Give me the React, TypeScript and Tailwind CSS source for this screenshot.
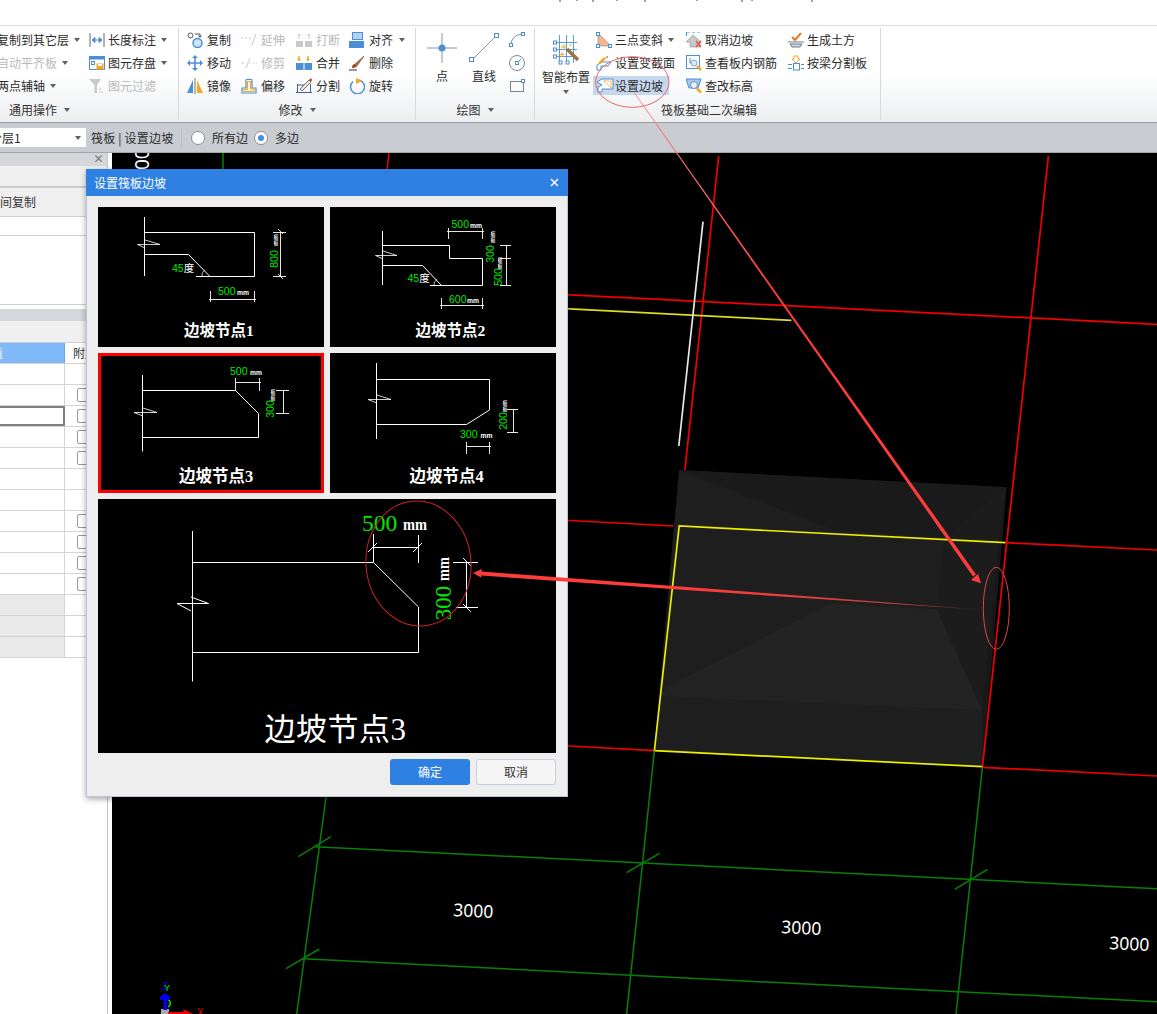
import React from "react";

const F = "font-['Noto_Sans_CJK_SC','Noto_Sans',sans-serif]";
const B = "#4a8fd8";
const O = "#f5a623";
const G = "#c9c9c9";

function S({ children, w = 16, h = 16 }: { children: React.ReactNode; w?: number; h?: number }) {
  return (
    <svg width={w} height={h} viewBox={`0 0 ${w} ${h}`} className="shrink-0" fill="none">
      {children}
    </svg>
  );
}

const Icons: Record<string, React.ReactNode> = {
  len: (
    <S>
      <path d="M1 1v14M15 1v14" stroke="#5b6b80" />
      <path d="M3 8h10M3 8l3-2.5v5zM13 8l-3-2.5v5z" stroke={B} fill={B} />
    </S>
  ),
  save: (
    <S>
      <rect x="0.5" y="1.5" width="15" height="13" stroke={B} fill="#fff" />
      <rect x="0.5" y="1.5" width="15" height="3" fill={B} />
      <rect x="2.5" y="6.5" width="3" height="3" stroke={B} />
      <rect x="7.5" y="8.5" width="7" height="6" fill={O} />
      <rect x="9" y="9" width="4" height="2" fill="#fff" />
    </S>
  ),
  filter: (
    <S>
      <path d="M0 1h12L8 7v8H5.5V7z" fill={G} />
      <path d="M10 11h2M10 14h4" stroke={G} />
    </S>
  ),
  copy: (
    <S>
      <circle cx="3.5" cy="3.5" r="2.5" stroke="#555" />
      <path d="M8 2h5v3M11.5 3.5l1.5 2 1.5-2" stroke="#555" />
      <circle cx="10.5" cy="11" r="4.5" stroke={B} strokeWidth="1.5" fill="#cfe2f6" />
    </S>
  ),
  extend: (
    <S>
      <path d="M0 6h2M4 6h2M8 6h2" stroke={G} />
      <path d="M11 13l4-11" stroke={G} />
    </S>
  ),
  brk: (
    <S>
      <rect x="0" y="9" width="7" height="6" fill={G} />
      <rect x="9" y="9" width="7" height="6" fill={G} />
      <path d="M3 7V2M1.5 3.5L3 2l1.5 1.5M13 7V2M11.5 3.5L13 2l1.5 1.5" stroke={G} />
    </S>
  ),
  align: (
    <S>
      <rect x="3.5" y="0.5" width="10" height="7" fill="#b5d0f0" stroke={B} />
      <rect x="0" y="9" width="15" height="7" fill={B} />
    </S>
  ),
  move: (
    <S>
      <path d="M8 1v14M1 8h14" stroke={B} strokeWidth="1.6" />
      <path d="M8 0l3 3H5zM8 16l3-3H5zM0 8l3-3v6zM16 8l-3-3v6z" fill={B} />
    </S>
  ),
  trim: (
    <S>
      <path d="M0 8h3M12 8h1.5M15 8h1" stroke={G} />
      <path d="M5 13l4-10" stroke={G} />
      <path d="M9 8h1" stroke={G} />
    </S>
  ),
  merge: (
    <S>
      <rect x="0" y="8" width="7.5" height="7" fill={B} />
      <rect x="8.5" y="8" width="7.5" height="7" fill={B} />
      <path d="M3 6V1M1.5 4.5h3M12 6V1M10.5 4.5h3" stroke={O} strokeWidth="1.4" />
    </S>
  ),
  del: (
    <S>
      <path d="M15 1L6 9l2 2z" fill="#a8794f" stroke="#6e4a2a" strokeWidth="0.6" />
      <path d="M6 9c-2 0-3 1.500-3 4 2 0 5-1 5-2z" fill="#9c4a1a" />
      <path d="M0 15h8" stroke="#333" />
    </S>
  ),
  mirror: (
    <S>
      <path d="M0 15L6 2v13z" fill={B} />
      <path d="M8 0v16" stroke="#777" />
      <path d="M10 2l6 13h-6z" fill={O} />
    </S>
  ),
  offset: (
    <S>
      <path d="M1 15V10h4V2c0-1 6-1 6 0v8h4v5z" stroke={B} strokeWidth="1.2" fill="#fff" />
      <path d="M3 13.500v-2h3.500V3.500h3V11h3.500v2.500z" stroke={O} strokeWidth="1.2" />
    </S>
  ),
  split: (
    <S>
      <path d="M1.500 6v9M14.500 6v9M0 14.500h16M1 7h7" stroke="#3f5f96" />
      <path d="M4 11L13 2l2 2-9 9z" fill="#e5e5e5" stroke="#555" strokeWidth="0.8" />
      <path d="M13 2l2-2 1 2-1 2z" fill="#c0392b" />
    </S>
  ),
  rotate: (
    <S>
      <path d="M4 3.500a7 7 0 1 0 6-1.500" stroke={B} strokeWidth="1.5" fill="none" />
      <path d="M7 0l6 3-6 3z" fill={O} />
    </S>
  ),
  point: (
    <S w={30} h={30}>
      <path d="M15 0v30M0 15h30" stroke="#8a96a6" />
      <circle cx="15" cy="15" r="3.500" fill={B} />
    </S>
  ),
  line: (
    <S w={30} h={30}>
      <path d="M3 27L27 3" stroke="#8a96a6" />
      <rect x="0.500" y="24.500" width="4" height="4" fill="#fff" stroke={B} />
      <rect x="25.500" y="0.500" width="4" height="4" fill="#fff" stroke={B} />
    </S>
  ),
  arc: (
    <S>
      <path d="M2 13C2 7 6 3 13 2" stroke="#7a8696" />
      <rect x="0.500" y="11.500" width="3" height="3" fill="#fff" stroke={B} />
      <rect x="12.500" y="0.500" width="3" height="3" fill="#fff" stroke={B} />
    </S>
  ),
  circle: (
    <S>
      <circle cx="8" cy="8" r="7.500" stroke="#7a8696" fill="#fff" />
      <path d="M8 8l4-4" stroke="#7a8696" />
      <rect x="6.500" y="6.500" width="3" height="3" fill="#fff" stroke={B} />
    </S>
  ),
  rect: (
    <S>
      <rect x="1.500" y="3.500" width="13" height="10" stroke="#7a8696" />
      <rect x="12.500" y="1.500" width="3" height="3" fill="#fff" stroke={B} />
    </S>
  ),
  tri: (
    <S>
      <path d="M2 1v13h13z" fill="#f6b48a" stroke="#7a8696" strokeWidth="0.6" />
      <rect x="0.500" y="0.500" width="3" height="3" fill="#fff" stroke={B} />
      <rect x="0.500" y="12.500" width="3" height="3" fill="#fff" stroke={B} />
      <rect x="12.500" y="12.500" width="3" height="3" fill="#fff" stroke={B} />
    </S>
  ),
  section: (
    <S>
      <path d="M1 15V10l5-3h9l-3 4H5v4z" stroke={B} fill="#fff" />
      <path d="M2 8l6-6 2 1.500-6 6z" fill={O} />
      <path d="M10 2l1-1 1 1-1 1.500z" fill="#c0562b" />
    </S>
  ),
  slope: (
    <S w={18} h={16}>
      <path d="M6 1h11v10H6v3H2V9l4-2-5-3z" stroke={B} fill="#fff" />
      <path d="M8 3h7v7" stroke={O} strokeDasharray="2 1" />
      <path d="M8 3l7 7" stroke={O} strokeDasharray="2 1" />
    </S>
  ),
  cancel: (
    <S>
      <path d="M0 10L7 3l7 6v6H4v-5z" fill="#c8c8c8" stroke="#8f8f8f" strokeWidth="0.6" />
      <path d="M1 0h3M6 0h3M11 0h3" stroke={B} />
      <path d="M0.500 0v4" stroke={B} />
      <path d="M10 9l5 6M15 9l-5 6" stroke="#e2574c" strokeWidth="1.6" />
    </S>
  ),
  view: (
    <S>
      <rect x="0.500" y="0.500" width="13" height="13" stroke={B} fill="#fff" />
      <path d="M4 3v5h3" stroke={B} />
      <circle cx="8" cy="8" r="3" stroke="#7ba6d8" fill="#dfe9f6" />
      <path d="M11 11l4 4" stroke={O} strokeWidth="2.500" />
    </S>
  ),
  elev: (
    <S>
      <path d="M0 1h15l-3 9H3z" fill="#a9c6ea" stroke={B} />
      <circle cx="8" cy="7" r="3.500" stroke="#6f8fb5" fill="#eaf1fa" />
      <path d="M11 10.500l4 4" stroke={O} strokeWidth="2.500" />
    </S>
  ),
  earth: (
    <S>
      <path d="M4 5l3 3 6-7" stroke="#e8792b" strokeWidth="2" />
      <path d="M0 10h16M2 12h12l-2 3H4z" stroke="#6b7a8c" fill="#cfd6de" />
    </S>
  ),
  beam: (
    <S>
      <path d="M6 1h4v3h2L8 8 4 4h2z" stroke={O} fill="#fff" />
      <rect x="5.500" y="8.500" width="6" height="6.500" stroke={B} fill="#fff" />
      <path d="M0 9.500h4M0 13.500h4M13 9.500h3M13 13.500h3" stroke={B} />
    </S>
  ),
  smart: (
    <S w={26} h={30}>
      <path d="M0 7.500h24M0 14.500h24M0 21.500h24M6.500 0v28M13.500 0v28M20.500 0v28" stroke={B} strokeWidth="0.9" />
      <rect x="0.500" y="6" width="3" height="3" fill="#fff" stroke={B} />
      <rect x="0.500" y="13" width="3" height="3" fill="#fff" stroke={B} />
      <rect x="0.500" y="20" width="3" height="3" fill="#fff" stroke={B} />
      <rect x="6" y="26" width="3" height="3" fill="#fff" stroke={B} />
      <rect x="13" y="26" width="3" height="3" fill="#fff" stroke={B} />
      <path d="M14 14l11 11" stroke="#9a7348" strokeWidth="3.500" />
      <path d="M8 12h6M11 9v6M17 9l1 2M9 17v5M6.500 19.500h5" stroke={O} />
    </S>
  ),
};

function Arrow() {
  return <span className="w-0 h-0 shrink-0 border-x-[3.5px] border-t-[4px] border-x-transparent border-t-[#606060]" />;
}

function Item({
  icon,
  t,
  arrow,
  off,
  wide,
  hi,
}: {
  icon?: string;
  t: string;
  arrow?: boolean;
  off?: boolean;
  wide?: boolean;
  hi?: boolean;
}) {
  return (
    <div className="h-[23px] flex items-center">
      <div
        className={`flex items-center whitespace-nowrap ${wide ? "gap-[4px]" : "gap-[3px]"} ${
          hi ? "bg-[#c6d7ee] -ml-[3px] pl-[3px] w-[76px] h-[19px]" : ""
        } ${off ? "text-[#b9b9b9]" : "text-[#2a2a2a]"}`}
      >
        {icon ? <span className="w-[16px] h-[16px] flex items-center">{Icons[icon]}</span> : null}
        <span>{t}</span>
        {arrow ? (
          <span className="ml-[2px] flex">
            <Arrow />
          </span>
        ) : null}
      </div>
    </div>
  );
}

function Col({ cls, children }: { cls: string; children: React.ReactNode }) {
  return <div className={`flex flex-col shrink-0 ${cls}`}>{children}</div>;
}

function GroupLabel({ t, arrow, cls }: { t: string; arrow?: boolean; cls?: string }) {
  return (
    <div className={`h-[23px] pt-[3px] flex items-center gap-[7px] text-[#333] ${cls ?? "justify-center"}`}>
      <span>{t}</span>
      {arrow ? <Arrow /> : null}
    </div>
  );
}

function Ribbon() {
  return (
    <div className="h-[98px] shrink-0 border-t border-b border-t-[#dcdcdc] border-b-[#9b9ea3] bg-linear-to-b from-white from-50% to-[#eceef0] pt-[2px] flex text-[12px] overflow-hidden">
      <div className="w-[179px] h-[92px] shrink-0 border-r border-[#d7d9dc] flex flex-col">
        <div className="h-[69px] flex">
          <Col cls="w-[92px] -ml-[3px]">
            <div className="h-[23px] flex items-center whitespace-nowrap text-[#2a2a2a]">
              复制到其它层
              <span className="ml-[5px] flex">
                <Arrow />
              </span>
            </div>
            <div className="h-[23px] flex items-center whitespace-nowrap text-[#b9b9b9]">
              自动平齐板
              <span className="ml-[5px] flex">
                <Arrow />
              </span>
            </div>
            <div className="h-[23px] flex items-center whitespace-nowrap text-[#2a2a2a]">
              两点辅轴
              <span className="ml-[5px] flex">
                <Arrow />
              </span>
            </div>
          </Col>
          <Col cls="">
            <Item icon="len" t="长度标注" arrow />
            <Item icon="save" t="图元存盘" arrow />
            <Item icon="filter" t="图元过滤" off />
          </Col>
        </div>
        <GroupLabel t="通用操作" arrow cls="pl-[9px]" />
      </div>

      <div className="w-[237px] h-[92px] shrink-0 border-r border-[#d7d9dc] flex flex-col">
        <div className="h-[69px] flex pl-[8px]">
          <Col cls="w-[54px]">
            <Item wide icon="copy" t="复制" />
            <Item wide icon="move" t="移动" />
            <Item wide icon="mirror" t="镜像" />
          </Col>
          <Col cls="w-[55px]">
            <Item wide icon="extend" t="延伸" off />
            <Item wide icon="trim" t="修剪" off />
            <Item wide icon="offset" t="偏移" />
          </Col>
          <Col cls="w-[53px]">
            <Item wide icon="brk" t="打断" off />
            <Item wide icon="merge" t="合并" />
            <Item wide icon="split" t="分割" />
          </Col>
          <Col cls="">
            <Item wide icon="align" t="对齐" arrow />
            <Item wide icon="del" t="删除" />
            <Item wide icon="rotate" t="旋转" />
          </Col>
        </div>
        <GroupLabel t="修改" arrow />
      </div>

      <div className="w-[119px] h-[92px] shrink-0 border-r border-[#d7d9dc] flex flex-col">
        <div className="h-[69px] flex pl-[11px]">
          <div className="w-[30px] pt-[5px] flex flex-col items-center shrink-0">
            {Icons.point}
            <div className="h-[26px] flex items-center whitespace-nowrap text-[#2a2a2a]">点</div>
          </div>
          <div className="w-[30px] ml-[12px] pt-[5px] flex flex-col items-center shrink-0">
            {Icons.line}
            <div className="h-[26px] flex items-center whitespace-nowrap text-[#2a2a2a]">直线</div>
          </div>
          <div className="ml-[10px] flex flex-col">
            <div className="h-[23px] flex items-center">{Icons.arc}</div>
            <div className="h-[23px] flex items-center">{Icons.circle}</div>
            <div className="h-[23px] flex items-center">{Icons.rect}</div>
          </div>
        </div>
        <GroupLabel t="绘图" arrow />
      </div>

      <div className="w-[346px] h-[92px] shrink-0 border-r border-[#d7d9dc] flex flex-col">
        <div className="h-[69px] flex pl-[7px]">
          <div className="w-[48px] pt-[7px] flex flex-col items-center shrink-0">
            {Icons.smart}
            <div className="h-[24px] flex items-center whitespace-nowrap text-[#2a2a2a]">智能布置</div>
            <div className="mt-[1px] flex">
              <Arrow />
            </div>
          </div>
          <Col cls="w-[90px] ml-[6px]">
            <Item icon="tri" t="三点变斜" arrow />
            <Item icon="section" t="设置变截面" />
            <Item hi icon="slope" t="设置边坡" />
          </Col>
          <Col cls="w-[102px]">
            <Item icon="cancel" t="取消边坡" />
            <Item icon="view" t="查看板内钢筋" />
            <Item icon="elev" t="查改标高" />
          </Col>
          <Col cls="">
            <Item icon="earth" t="生成土方" />
            <Item icon="beam" t="按梁分割板" />
          </Col>
        </div>
        <GroupLabel t="筏板基础二次编辑" cls="justify-center pl-[3px]" />
      </div>
    </div>
  );
}

function Radio({ on, t }: { on?: boolean; t: string }) {
  return (
    <div className="flex items-center gap-[7px]">
      <span className="w-[14px] h-[14px] rounded-full bg-white border border-[#8e8e8e] flex items-center justify-center">
        {on ? <span className="w-[6px] h-[6px] rounded-full bg-[#3d8fe8]" /> : null}
      </span>
      <span>{t}</span>
    </div>
  );
}

function OptionBar() {
  return (
    <div className="h-[30px] shrink-0 bg-[#c9ccd1] border-b border-[#a4a6ab] flex items-center text-[12px] text-[#2a2a2a] whitespace-nowrap">
      <div className="w-[86px] h-[19px] bg-white flex items-center overflow-hidden relative shrink-0">
        <span className="-ml-[10px]">分层1</span>
        <span className="absolute left-[75px] top-[8px] flex">
          <Arrow />
        </span>
      </div>
      <span className="ml-[5px] w-[90px] shrink-0 tracking-[0.2px]">筏板 | 设置边坡</span>
      <span className="w-px h-[19px] bg-[#bdc0c5] shrink-0" />
      <div className="ml-[9px] w-[63px] shrink-0">
        <Radio t="所有边" />
      </div>
      <Radio on t="多边" />
    </div>
  );
}

type Cell = "plain" | "check" | "sel" | "gray";
const rows: Cell[] = ["plain", "check", "sel", "check", "check", "plain", "plain", "check", "check", "check", "check", "gray", "gray", "gray"];

function LeftPanel() {
  return (
    <div className="w-[112px] shrink-0 bg-white text-[12px] text-[#333] whitespace-nowrap">
      <div className="w-[108px] h-full border-r border-[#c6c6c6] flex flex-col">
        <div className="h-[13px] bg-[#d5d7db] relative">
          <span className="absolute left-[93px] -top-[1px] text-[11px] font-bold leading-[13px] text-[#777]">×</span>
        </div>
        <div className="h-[22px] bg-[#f0f0f0] border-b-2 border-[#c9cbd0]" />
        <div className="h-[29px] bg-[#f0f0f0] border-b border-[#cfd0d3] flex items-center -ml-[12px]">
          <span>空间复制</span>
        </div>
        <div className="h-[19px] border-b border-[#cfd0d3]" />
        <div className="h-[69px] border-b border-[#cfd0d3]" />
        <div className="h-[4px]" />
        <div className="h-[12px] bg-[#d5d7db]" />
        <div className="h-[22px] bg-[#f0f0f0] border-b border-[#cfd0d3]" />
        <div className="h-[21px] flex border-b border-[#d4d4d4]">
          <div className="w-[65px] bg-[#7fb9f8] border-r border-[#6aa8ea] overflow-hidden flex items-center">
            <span className="-ml-[9px] text-[#eee]">值</span>
          </div>
          <div className="pl-[8px] flex items-center">附加</div>
        </div>
        {rows.map((r, i) => (
          <div key={i} className="h-[21px] flex border-b border-[#d4d4d4]">
            <div
              className={`w-[65px] ${r === "gray" ? "bg-[#e9e9e9]" : ""} ${
                r === "sel" ? "border-2 border-l-0 border-[#808080]" : "border-r border-[#d4d4d4]"
              }`}
            />
            <div className="flex items-center pl-[12px]">
              {r === "check" || r === "sel" ? (
                <span className="w-[14px] h-[14px] rounded-[2px] border border-[#999] bg-white" />
              ) : null}
            </div>
          </div>
        ))}
      </div>
    </div>
  );
}

const W = "#ffffff";
const GR = "#00e800";
const SANS = "Liberation Sans, sans-serif";
const SERIF = "Liberation Serif, Noto Sans CJK SC, serif";

function Lines({ d, w = 1 }: { d: string; w?: number }) {
  return <path d={d} stroke={W} strokeWidth={w} fill="none" />;
}
function Num({ x, y, t, rot }: { x: number; y: number; t: string; rot?: boolean }) {
  return (
    <text x={x} y={y} fill={GR} fontSize="10.5" fontFamily={SANS} textAnchor={rot ? "middle" : "start"} transform={rot ? `rotate(-90 ${x} ${y})` : undefined}>
      {t}
    </text>
  );
}
function Mm({ x, y, rot }: { x: number; y: number; rot?: boolean }) {
  return (
    <text
      x={x}
      y={y}
      fill={W}
      fontSize="8"
      fontWeight="700"
      fontFamily={SANS}
      textLength={12}
      lengthAdjust="spacingAndGlyphs"
      textAnchor={rot ? "middle" : "start"}
      transform={rot ? `rotate(-90 ${x} ${y})` : undefined}
    >
      mm
    </text>
  );
}
function Label({ x, t, size = 15.5, y = 129 }: { x: number; t: string; size?: number; y?: number }) {
  return (
    <text x={x} y={y} fill={W} fontSize={size} fontWeight="700" fontFamily={SERIF} textAnchor="middle">
      {t}
    </text>
  );
}
function Deg({ x, y }: { x: number; y: number }) {
  return (
    <text x={x} y={y} fontSize="10.5" fontFamily={SANS}>
      <tspan fill={GR}>45</tspan>
      <tspan fill={W} fontFamily="Noto Sans CJK SC, sans-serif">
        度
      </tspan>
    </text>
  );
}

function T1() {
  return (
    <svg viewBox="0 0 226 140" className="w-full h-full block">
      <Lines d="M46.500 10V69M46.500 25.500H156.500V69.500H98M46.500 47.500H90.500L112 69.500" />
      <Lines d="M39.500 37.500L62 37.500M62 37.500L47 33M39.500 37.500L47 41" w={0.8} />
      <Lines d="M104 69c0-3 1-5 3-6" w={0.7} />
      <Deg x={74} y={65} />
      <Lines d="M182.500 25V69.500M175 25.500H188M175 69.500H188M180 22l5 5M180 67l5 5" w={0.9} />
      <Num x={180} y={52} t="800" rot />
      <Mm x={180} y={33} rot />
      <Lines d="M112.500 84V95M156.500 84V95M111 92.500H158" w={0.9} />
      <Num x={120} y={87.500} t="500" />
      <Mm x={139} y={87.500} />
      <Label x={121} t="边坡节点1" />
    </svg>
  );
}
function T2() {
  return (
    <svg viewBox="0 0 226 140" className="w-full h-full block">
      <Lines d="M52.500 24V78M52.500 38.500H119.500V51.500H152.500V78.500H100M52.500 58.500H92.500L111.500 78.500" />
      <Lines d="M45.500 48.500L67 48.500M67 48.500L53 44M45.500 48.500L53 52" w={0.8} />
      <Lines d="M104 78c0-3 1-4 3-6" w={0.7} />
      <Deg x={77.500} y={75} />
      <Lines d="M118.500 21V32M152.500 21V32M117 24.500H154" w={0.9} />
      <Num x={121.500} y={20.500} t="500" />
      <Mm x={140} y={20.500} />
      <Lines d="M176.500 38V78.500M170 38.500H181M170 51.500H181M170 78.500H181" w={0.9} />
      <Num x={164} y={47} t="300" rot />
      <Mm x={165} y={30} rot />
      <Num x={172} y={70} t="500" rot />
      <Mm x={172} y={56} rot />
      <Lines d="M111.500 91V102M152.500 91V102M110 98.500H154" w={0.9} />
      <Num x={119} y={95.500} t="600" />
      <Mm x={137} y={95.500} />
      <Label x={120.500} t="边坡节点2" />
    </svg>
  );
}
function T3() {
  return (
    <svg viewBox="0 0 220 134" className="w-full h-full block">
      <Lines d="M41.500 19V95.500M41.500 34.500H134.500L157.500 57.500V81.500H41.500" />
      <Lines d="M33 56.500L56 56.500M56 56.500L42 52M33 56.500L42 60" w={0.8} />
      <Lines d="M134.500 22V35M158.500 22V35M134 26.500H160" w={0.9} />
      <Num x={129} y={18.500} t="500" />
      <Mm x={149} y={18.500} />
      <Lines d="M182.500 34.500V57.500M175 34.500H188M175 57.500H188" w={0.9} />
      <Num x={173} y={53} t="300" rot />
      <Mm x={173.500} y={39} rot />
      <Label x={115} size={16.500} y={126} t="边坡节点3" />
    </svg>
  );
}
function T4() {
  return (
    <svg viewBox="0 0 226 140" className="w-full h-full block">
      <Lines d="M46.500 10V86M46.500 26.500H159.500V57M159.500 57L136.500 71.500H46.500" />
      <Lines d="M38 46.500L61 46.500M61 46.500L47 42M38 46.500L47 50" w={0.8} />
      <Lines d="M183.500 56V80M177 56.500H188M177 79.500H188" w={0.9} />
      <Num x={177} y={68} t="200" rot />
      <Mm x={177} y={53} rot />
      <Lines d="M136.500 89V101M159.500 89V101M136 93.500H161" w={0.9} />
      <Num x={130} y={85} t="300" />
      <Mm x={150.500} y={85} />
      <Label x={116.500} size={16.500} t="边坡节点4" />
    </svg>
  );
}
function Big() {
  return (
    <svg viewBox="0 0 458 254" className="w-full h-full block">
      <Lines d="M94.500 32V182.500M94.500 63.500H275.500L320.500 108V153.500H94.500" />
      <Lines d="M79 104.500H110.500M79 104.500L93 112M110.500 104.500L93 98" />
      <Lines d="M275.500 35V63M320.500 36V64M275.500 48.500H320.500M270 53L279 44M315 53L324 44" />
      <Lines d="M368.500 63.500V108.500M355 63.500H380M358 108.500H380M365 59L373 67M365 105L373 113" />
      <text x={264} y={32} fill={GR} fontSize="23.500" fontFamily="Liberation Serif, serif">
        500
      </text>
      <text x={305} y={31} fill={W} fontSize="17" fontWeight="700" textLength={24} lengthAdjust="spacingAndGlyphs" fontFamily="Liberation Serif, serif">
        mm
      </text>
      <text x={353} y={104} fill={GR} fontSize="23" fontFamily="Liberation Serif, serif" textAnchor="middle" transform="rotate(-90 353 104)">
        300
      </text>
      <text x={351} y={70} fill={W} fontSize="17" fontWeight="700" textLength={24} lengthAdjust="spacingAndGlyphs" fontFamily="Liberation Serif, serif" textAnchor="middle" transform="rotate(-90 351 70)">
        mm
      </text>
      <text x={237.500} y={241} fill={W} fontSize="31" letterSpacing="0.5" fontFamily={SERIF} textAnchor="middle">
        边坡节点3
      </text>
    </svg>
  );
}

function Dialog() {
  return (
    <div className="absolute left-[86px] top-[169px] w-[482px] h-[628px] bg-[#eeeeee] border border-[#bcc3d3] border-t-0 shadow-[0_2px_6px_rgba(0,0,0,0.35)] flex flex-col text-[12px] z-10">
      <div className="h-[27px] shrink-0 -mx-px bg-[#2f80e3] text-white flex items-center justify-between pl-[8px] pr-[9px]">
        <span>设置筏板边坡</span>
        <svg width="9" height="9" viewBox="0 0 9 9">
          <path d="M1 1l7 7M8 1L1 8" stroke="#fff" strokeWidth="1.500" />
        </svg>
      </div>
      <div className="pt-[11px] px-[11px] flex flex-col gap-[6px]">
        <div className="grid grid-cols-[226px_226px] grid-rows-[140px_140px] gap-x-[6px] gap-y-[6px]">
          <div className="bg-black"><T1 /></div>
          <div className="bg-black"><T2 /></div>
          <div className="bg-black border-[3px] border-[#ff0000]"><T3 /></div>
          <div className="bg-black"><T4 /></div>
        </div>
        <div className="w-[458px] h-[254px] bg-black"><Big /></div>
        <div className="flex justify-end gap-[6px]">
          <button className="w-[80px] h-[26px] rounded-[3px] bg-[#2f80e3] text-white text-[12px]">确定</button>
          <button className="w-[80px] h-[26px] rounded-[3px] bg-[#f5f5f5] border border-[#c8cdd8] text-[#333] text-[12px]">取消</button>
        </div>
      </div>
    </div>
  );
}

function Canvas() {
  const R = "#f00000";
  const Y = "#eeee00";
  const Gn = "#088008";
  return (
    <svg viewBox="112 153 1045 861" className="flex-1 h-full block bg-black min-w-0">
      <polygon points="679,470 1006.500,487.300 982.500,766.700 654.400,750.700" fill="#1e1e1e" />
      <polygon points="679,470 834,530 944.500,538 1006.500,487.300" fill="#1a1a1a" />
      <polygon points="1006.500,487.300 982,710 936.900,609.300 944.500,538" fill="#1c1c1c" />
      <polygon points="1006.500,487.300 982.500,766.700 982,710 1001,520" fill="#181818" />
      <polygon points="662.800,690 828.400,604 936.900,609.300 981.800,710 662.800,696" fill="#232323" />
      <polygon points="679,470 654.400,750.700 662,690" fill="#1a1a1a" />

      <path d="M223 153V170" stroke={Gn} strokeWidth="1.500" />
      <path d="M389 153L387 170" stroke={R} strokeWidth="1.500" />

      <g stroke={R} strokeWidth="1.700" fill="none">
        <path d="M718.700 156L684.900 470" />
        <path d="M1048.400 156L982.500 766.700" />
        <path d="M560 294.300L1157 324.300" />
        <path d="M560 520L673.400 526M1005.400 542.700L1157 550" />
        <path d="M560 745.500L654.400 750.700M982.500 767.300L1157 776" />
      </g>
      <path d="M560 308.400L791.400 320.300" stroke="#dcdc20" strokeWidth="1.700" />
      <path d="M703 221.700L678.800 446" stroke="#e8e8e8" strokeWidth="1.700" />
      <g stroke={Y} strokeWidth="1.700" fill="none">
        <path d="M1005.400 542.700L679.200 526L654.400 750.700L982.500 766.700" />
      </g>

      <g stroke={Gn} strokeWidth="1.500" fill="none">
        <path d="M327 790L296.700 1014" />
        <path d="M654.400 750.700L626.600 1014" />
        <path d="M982.500 766.700L956 1014" />
        <path d="M315 846.700L1157 888.700" />
        <path d="M303.300 958.700L1157 1001.700" />
        <path d="M298.300 856.700L331 836.700M286 968.700L319.300 949M626.600 872.700L659.400 853.300M954.700 889.300L987.500 869.300" />
      </g>

      <g fill="#ffffff" fontSize="17.500" fontFamily="Noto Sans, sans-serif" textAnchor="middle">
        <text x="473" y="917" transform="rotate(3 473 917)">3000</text>
        <text x="801" y="934" transform="rotate(3 801 934)">3000</text>
        <text x="1129" y="950" transform="rotate(3 1129 950)">3000</text>
      </g>

      <text x="0" y="0" fill="#fff" fontSize="19" fontFamily="Noto Sans, sans-serif" transform="translate(148.500 170) rotate(-90)">00</text>

      <rect x="161" y="1009" width="8" height="5" fill="#aaaaaa" />
      <path d="M168 1012h16l-1-3 10 5h-25z" fill="#ee0000" />
      <path d="M166 998c3 1 5 4 4 7l-2 2" stroke="#00e000" strokeWidth="1.500" fill="none" />
      <path d="M163.500 1010v-10h-3.500v-3l5-4 5 4v3h-3v10z" fill="#0000ee" />
      <text x="162" y="990" fill="#0000ee" fontSize="10" fontFamily="Liberation Sans, sans-serif">Z</text>
      <text x="164" y="991" fill="#00e000" fontSize="9" fontFamily="Liberation Sans, sans-serif">Y</text>
      <text x="197" y="1016" fill="#ee0000" fontSize="10" fontFamily="Liberation Sans, sans-serif">X</text>
    </svg>
  );
}

function Annotations() {
  const A = "#ff3c3c";
  return (
    <svg width="1157" height="1014" viewBox="0 0 1157 1014" className="absolute left-0 top-0 z-20 pointer-events-none">
      <defs>
        <linearGradient id="fade" gradientUnits="userSpaceOnUse" x1="700" y1="590" x2="985" y2="610">
          <stop offset="0" stopColor={A} />
          <stop offset="0.7" stopColor="#c04040" />
          <stop offset="1" stopColor="#5a2a2a" />
        </linearGradient>
        <linearGradient id="thin" gradientUnits="userSpaceOnUse" x1="634" y1="93" x2="981" y2="583">
          <stop offset="0" stopColor="#f08a8a" />
          <stop offset="0.4" stopColor={A} />
          <stop offset="1" stopColor={A} />
        </linearGradient>
      </defs>
      <path d="M560 0v2M577 0v1M593 0v2M617 0v1M645 0v2M697 0v1M742 0v2M752 0v1M812 0v2" stroke="#444" />
      <ellipse cx="632.300" cy="82" rx="36.700" ry="25.300" fill="none" stroke="#e8686c" strokeWidth="1" />
      <polygon points="634,93 634.700,92.700 976,574.500 973,576.500" fill="url(#thin)" />
      <polygon points="981,583.300 971,580 978,574" fill={A} />
      <ellipse cx="996.300" cy="608.300" rx="13" ry="41" fill="none" stroke="#d84848" strokeWidth="1" />
      <ellipse cx="418.500" cy="563.500" rx="52.500" ry="62.500" fill="none" stroke="#c8242a" strokeWidth="1" transform="rotate(-6 418.500 563.500)" />
      <polygon points="473,573 482,569 481.500,571.500 700,588 985,610 700,591 481,575.500 481.500,577.700" fill="url(#fade)" />
    </svg>
  );
}

export default function App() {
  return (
    <div className={`relative w-[1157px] h-[1014px] overflow-hidden bg-white flex flex-col ${F}`}>
      <div className="h-[25px] shrink-0 bg-white" />
      <Ribbon />
      <OptionBar />
      <div className="flex-1 min-h-0 flex">
        <LeftPanel />
        <Canvas />
      </div>
      <Dialog />
      <Annotations />
    </div>
  );
}
